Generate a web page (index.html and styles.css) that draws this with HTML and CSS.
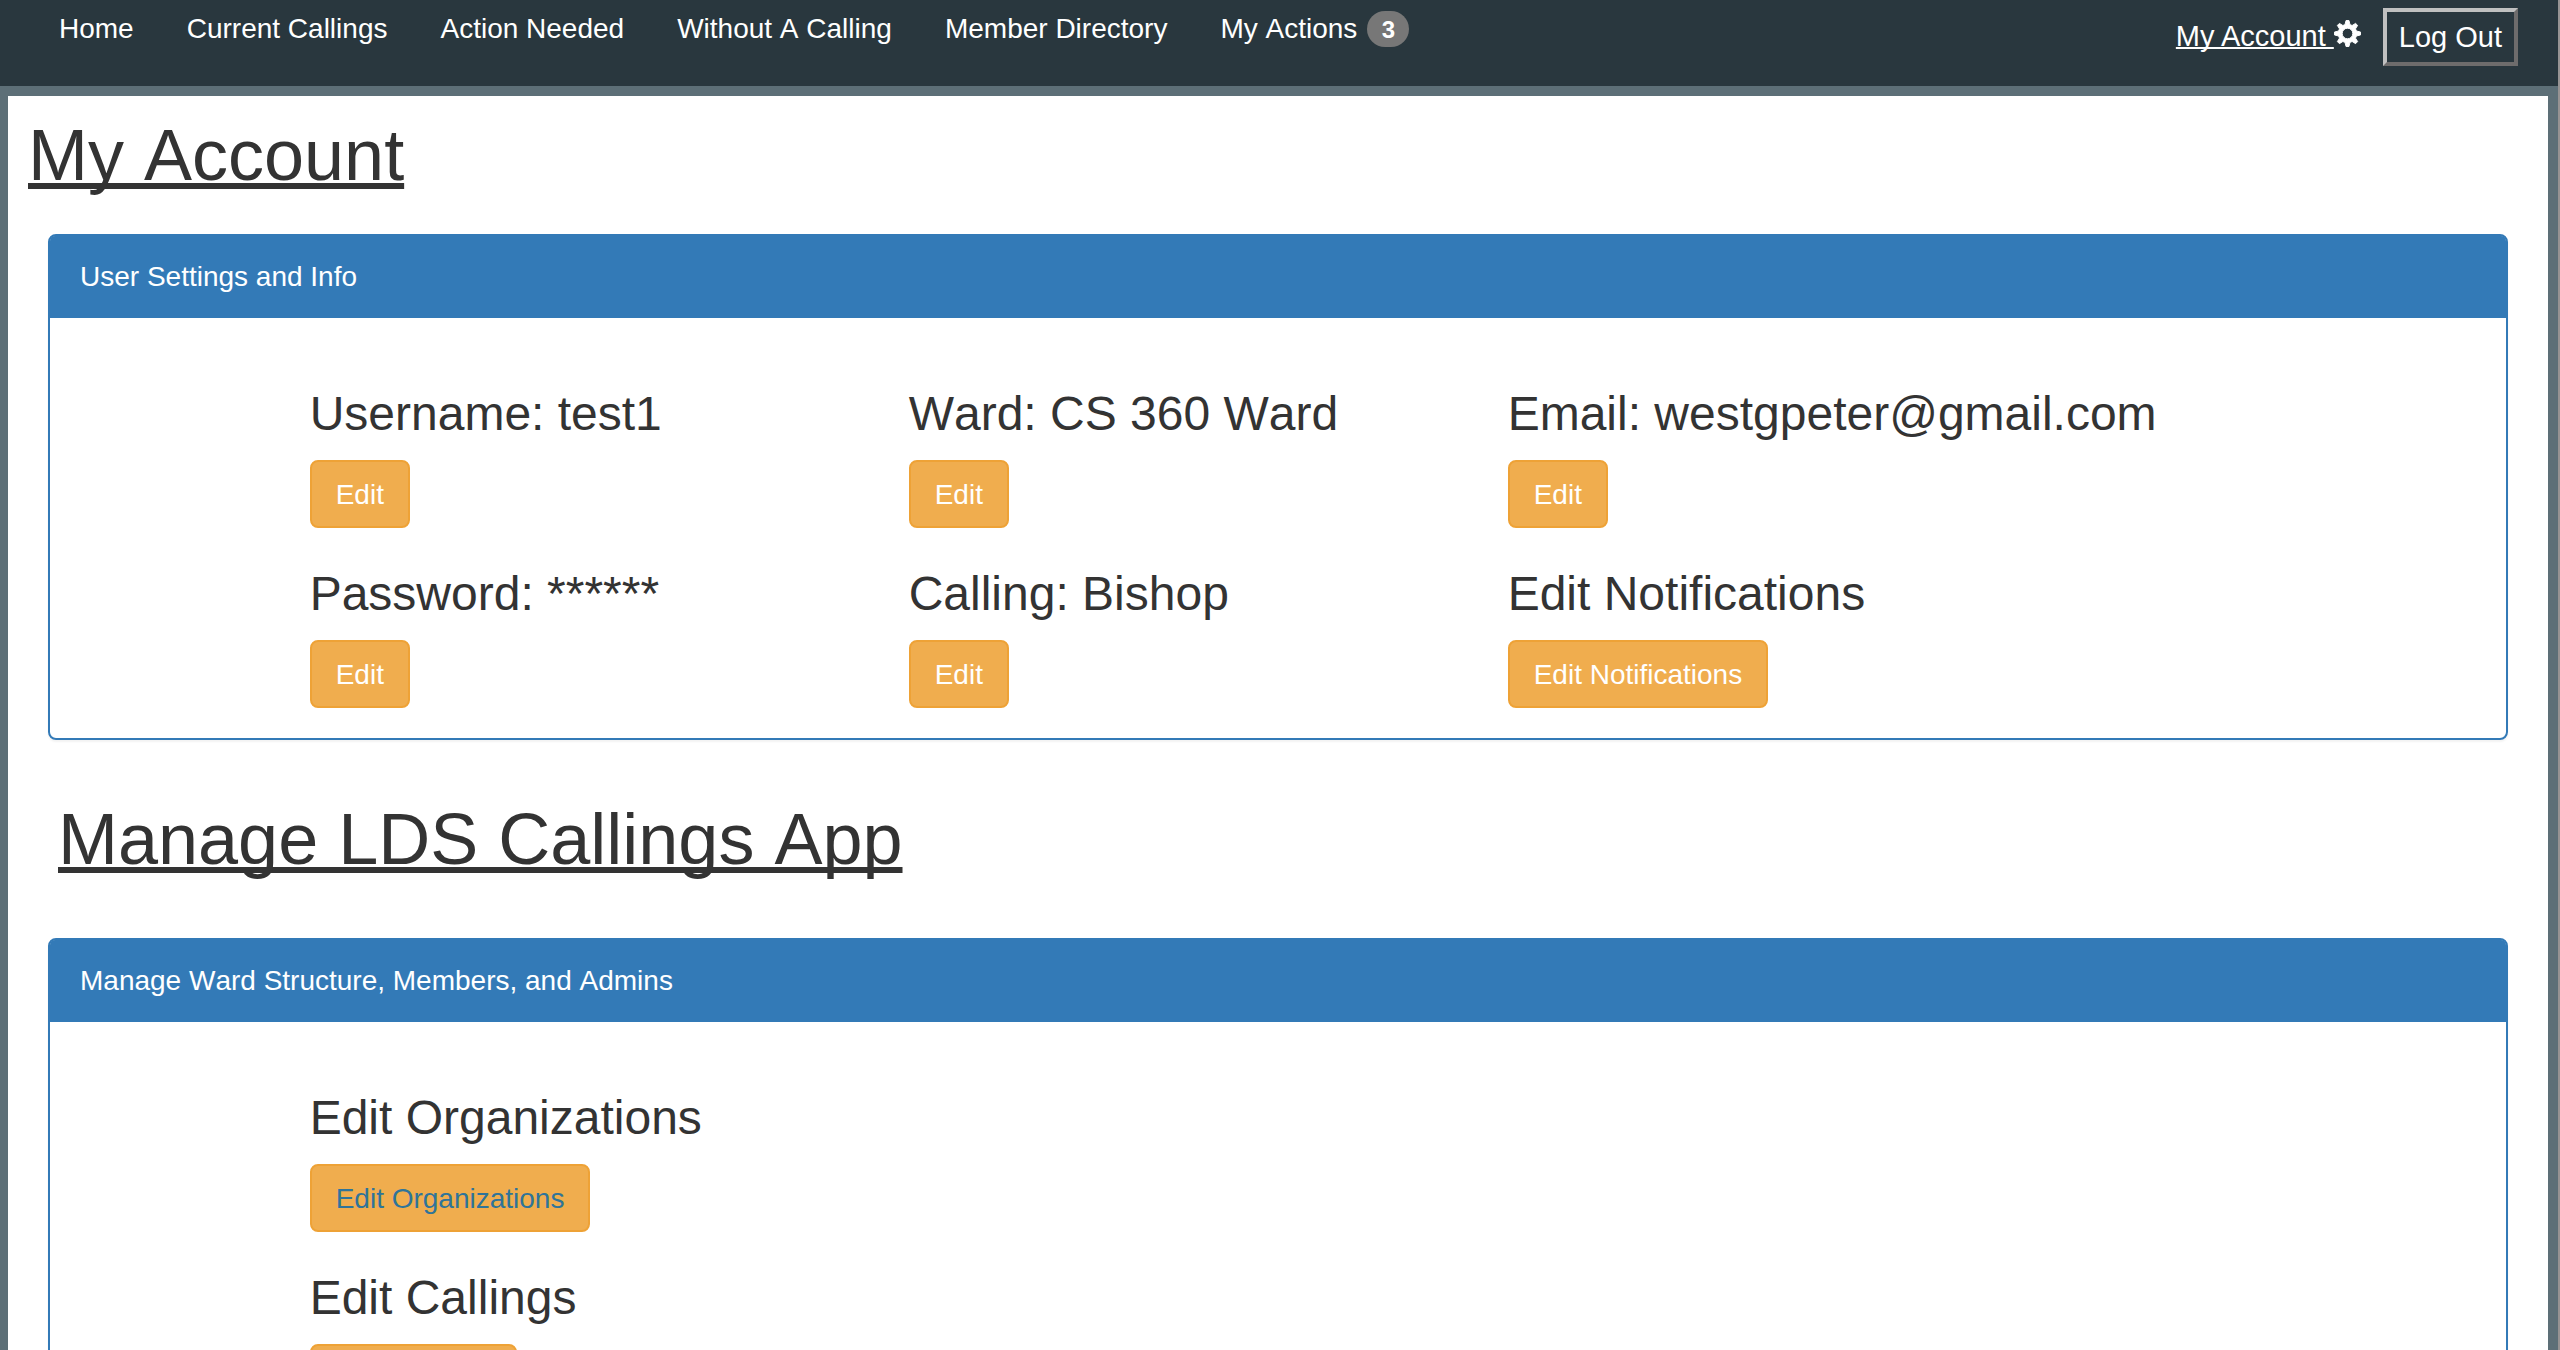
FILE: index.html
```html
<!DOCTYPE html>
<html lang="en">
<head>
<meta charset="utf-8">
<meta name="viewport" content="width=device-width, initial-scale=1">
<title>My Account</title>
<link rel="stylesheet" href="styles.css">
</head>
<body>
<header class="topbar">
  <nav class="topnav">
    <a href="#">Home</a>
    <a href="#">Current Callings</a>
    <a href="#">Action Needed</a>
    <a href="#">Without A Calling</a>
    <a href="#">Member Directory</a>
    <a href="#" class="with-badge">My Actions <span class="badge">3</span></a>
  </nav>
  <div class="session">
    <a href="#" class="account"><span class="account-label">My Account&nbsp;</span><svg class="gear" viewBox="0 0 28 28" aria-hidden="true"><path fill="currentColor" stroke="currentColor" stroke-width="1" stroke-linejoin="round" fill-rule="evenodd" d="M12.500 .5h3l1.100 4.300 2.200.9 3.600-2.200 2.100 2.100-2.200 3.600.9 2.200 4.300 1.100v3l-4.300 1.100-.9 2.200 2.200 3.600-2.100 2.100-3.600-2.200-2.200.9-1.100 4.300h-3l-1.100-4.300-2.200-.9-3.600 2.200-2.100-2.100 2.200-3.600-.9-2.200-4.300-1.100v-3l4.300-1.100.9-2.200-2.200-3.600 2.100-2.100 3.600 2.200 2.200-.9zM14 8.500a5.500 5.500 0 1 0 0 11a5.500 5.500 0 1 0 0-11z"/></svg></a>
    <button type="button" class="logout">Log Out</button>
  </div>
</header>
<main class="sheet">
  <h1 class="title">My Account</h1>
  <section class="panel">
    <div class="panel-heading">User Settings and Info</div>
    <div class="panel-body">
      <div class="cell first"><h3>Username: test1</h3><button type="button" class="btn">Edit</button></div>
      <div class="cell"><h3>Ward: CS 360 Ward</h3><button type="button" class="btn">Edit</button></div>
      <div class="cell"><h3>Email: westgpeter@gmail.com</h3><button type="button" class="btn">Edit</button></div>
      <div class="cell first"><h3>Password: ******</h3><button type="button" class="btn">Edit</button></div>
      <div class="cell"><h3>Calling: Bishop</h3><button type="button" class="btn">Edit</button></div>
      <div class="cell"><h3>Edit Notifications</h3><button type="button" class="btn">Edit Notifications</button></div>
    </div>
  </section>
  <h1 class="title manage">Manage LDS Callings App</h1>
  <section class="panel">
    <div class="panel-heading">Manage Ward Structure, Members, and Admins</div>
    <div class="panel-body">
      <div class="cell first"><h3>Edit Organizations</h3><a href="#" class="btn btn-link">Edit Organizations</a></div>
      <div class="cell first"><h3>Edit Callings</h3><a href="#" class="btn btn-link">Edit Callings</a></div>
    </div>
  </section>
</main>
</body>
</html>
```
FILE: styles.css
```css
* {
  box-sizing: border-box;
}

html {
  background: #5d6f77;
}

body {
  margin: 0;
  min-height: 100vh;
  border-right: 2px solid #979393;
  color: #333;
  font: 28px/40px "Helvetica Neue", Helvetica, "Liberation Sans", Arial, sans-serif;
  font-kerning: none;
}

.topbar {
  display: flex;
  justify-content: space-between;
  align-items: flex-start;
  height: 86px;
  padding: 8px 40px 0 59px;
  background: #29373e;
}

.topnav {
  display: flex;
  gap: 53px;
  padding-top: 1px;
}

.topnav a {
  color: #fff;
  text-decoration: none;
  white-space: nowrap;
}

.with-badge {
  display: flex;
  align-items: center;
  gap: 10px;
}

.badge {
  min-width: 42px;
  padding: 7px 14px 5px;
  border-radius: 20px;
  background: #777;
  font-size: 24px;
  font-weight: bold;
  line-height: 24px;
  text-align: center;
}

.session {
  display: flex;
  gap: 22px;
  font-size: 29px;
  font-kerning: normal;
}

.account {
  display: flex;
  align-items: flex-start;
  padding-top: 8px;
  color: #fff;
  text-decoration: none;
  white-space: nowrap;
}

.account-label {
  text-decoration: underline;
  text-decoration-skip-ink: none;
  text-decoration-thickness: 2px;
}

.gear {
  width: 27px;
  height: 27px;
  margin-top: 4px;
}

.logout {
  height: 58px;
  padding: 0 12px;
  border: 4px solid;
  border-color: #c0c0c0 #6e6c6c #6e6c6c #c0c0c0;
  background: transparent;
  color: #fff;
  font: inherit;
}

.sheet {
  min-height: calc(100vh - 96px);
  margin: 10px 10px 0 8px;
  padding: 19px 40px 0;
  overflow: hidden;
  background: #fff;
}

.title {
  margin: 0 0 39px -20px;
  font-size: 72px;
  font-weight: normal;
  line-height: 80px;
  text-decoration: underline;
  text-decoration-skip-ink: none;
  text-decoration-thickness: 6px;
}

.manage {
  margin: 59px 0 59px 10px;
}

.panel {
  border: 2px solid #337ab7;
  border-radius: 8px;
  box-shadow: 0 2px 2px rgba(0, 0, 0, 0.05);
}

.panel-heading {
  padding: 21px 30px;
  border-radius: 5px 5px 0 0;
  background: #337ab7;
  color: #fff;
}

.panel-body {
  display: grid;
  grid-template-columns: repeat(12, minmax(0, 1fr));
  padding: 30px;
}

.cell {
  grid-column: span 3;
  padding: 0 30px;
  white-space: nowrap;
}

.cell.first {
  grid-column: 2 / span 3;
}

.cell h3 {
  margin: 40px 0 20px;
  font-size: 48px;
  font-weight: normal;
  line-height: 52px;
}

.btn {
  display: block;
  width: max-content;
  height: 68px;
  padding: 13px 24px 11px;
  border: 2px solid #eea236;
  border-radius: 8px;
  background: #f0ad4e;
  color: #fff;
  font: inherit;
  font-kerning: inherit;
  text-decoration: none;
}

.btn-link {
  color: #2f7499;
}
```
